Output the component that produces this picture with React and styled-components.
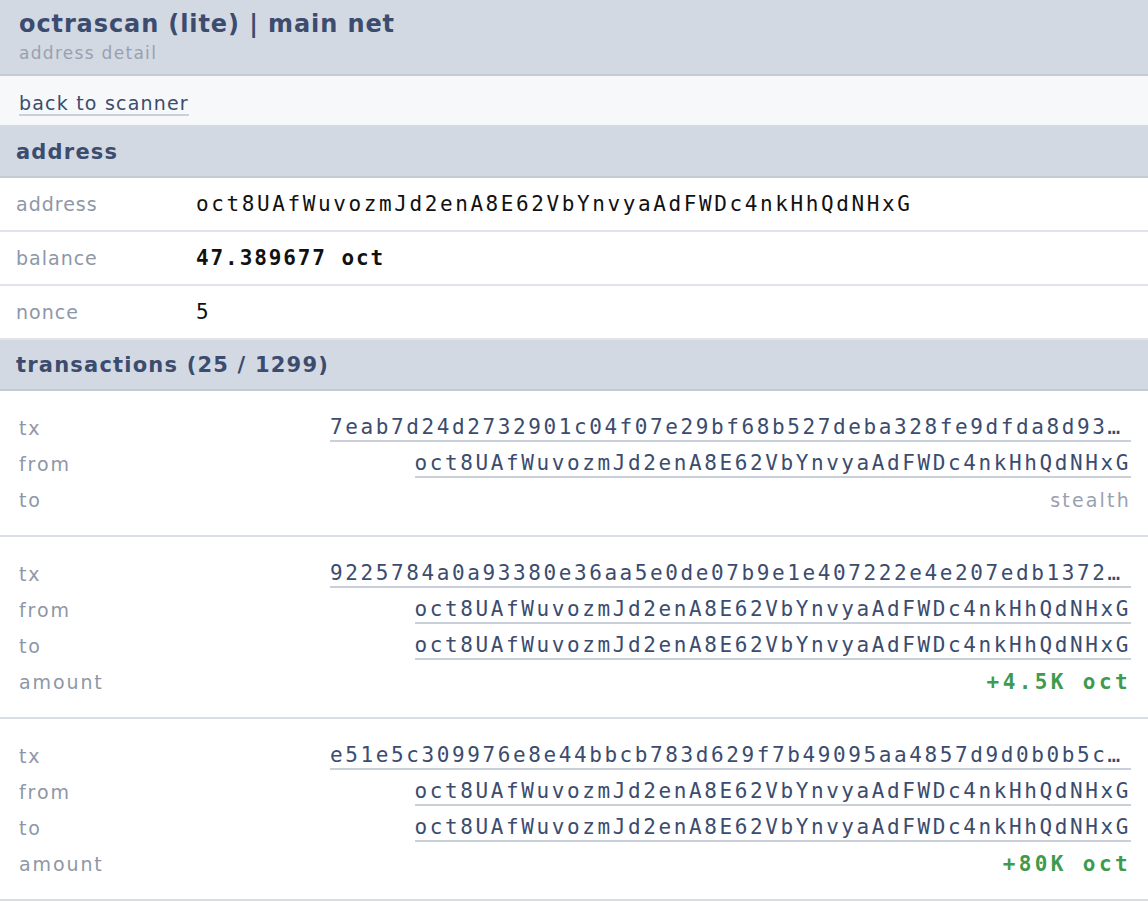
import React from 'react';
import styled, { createGlobalStyle } from 'styled-components';

const Global = createGlobalStyle`
  html, body { margin: 0; padding: 0; background: #ffffff; }
  body { font-family: "DejaVu Sans", Verdana, sans-serif; }
`;

const SANS = `"DejaVu Sans", Verdana, sans-serif`;
const MONO = `"DejaVu Sans Mono", Menlo, monospace`;

const Page = styled.div`
  width: 1148px;
  display: flex;
  flex-direction: column;
`;

const Header = styled.header`
  height: 76px;
  box-sizing: border-box;
  padding: 9px 19px 0;
  background: #d3d9e2;
  border-bottom: 2px solid #c4cbd5;
  display: flex;
  flex-direction: column;
`;

const Title = styled.h1`
  margin: 0;
  font-family: ${SANS};
  font-weight: bold;
  font-size: 24px;
  line-height: 30px;
  letter-spacing: 0.9px;
  color: #3b4c6f;
`;

const Subtitle = styled.div`
  font-family: ${SANS};
  font-size: 17px;
  line-height: 28px;
  letter-spacing: 1.3px;
  color: #98a1b0;
`;

const Nav = styled.nav`
  height: 51px;
  box-sizing: border-box;
  padding: 0 19px 9px;
  background: #f6f8fa;
  border-bottom: 2px solid #d4dae2;
  display: flex;
  align-items: flex-end;
`;

const Link = styled.a`
  font-family: ${SANS};
  font-size: 19px;
  letter-spacing: 1.2px;
  color: #3b4c6f;
  text-decoration: none;
  border-bottom: 2px solid #c9d0da;
  line-height: 22px;
`;

const SectionHead = styled.div`
  height: 51px;
  box-sizing: border-box;
  padding: 0 16px;
  background: #d3d9e2;
  border-bottom: 2px solid #c4cbd5;
  display: flex;
  align-items: center;
  font-family: ${SANS};
  font-weight: bold;
  font-size: 21px;
  letter-spacing: 1.2px;
  color: #3b4c6f;
`;

const InfoRow = styled.div`
  height: 54px;
  box-sizing: border-box;
  padding: 0 16px;
  border-bottom: 2px solid #e1e5eb;
  display: grid;
  grid-template-columns: 180px 1fr;
  align-items: center;
`;

const Label = styled.div`
  font-family: ${SANS};
  font-size: 19px;
  letter-spacing: ${(p) => (p.$wide ? '1.9px' : '1px')};
  color: #8d97a7;
`;

const Value = styled.div`
  font-family: ${MONO};
  font-size: 21px;
  letter-spacing: ${(p) => (p.$bold ? '1.9px' : '2.6px')};
  font-weight: ${(p) => (p.$bold ? 'bold' : 'normal')};
  color: #111111;
`;

const Card = styled.div`
  box-sizing: border-box;
  padding: 19px 17px 17px 19px;
  border-bottom: 2px solid #d9dee5;
  display: flex;
  flex-direction: column;
`;

const TxRow = styled.div`
  height: 36px;
  display: grid;
  grid-template-columns: 311px minmax(0, 1fr);
  align-items: center;
`;

const TxValue = styled.div`
  min-width: 0;
  text-align: right;
  white-space: nowrap;
  overflow: hidden;
`;

const Mono = styled.span`
  display: inline-block;
  max-width: 100%;
  box-sizing: border-box;
  overflow: hidden;
  text-overflow: ellipsis;
  white-space: nowrap;
  vertical-align: middle;
  font-family: ${MONO};
  font-size: 21px;
  line-height: 25px;
  letter-spacing: 2.6px;
  color: #3b4c6f;
  border-bottom: 2px solid #c9d0da;
`;

const Muted = styled.span`
  font-family: ${SANS};
  font-size: 19px;
  letter-spacing: 2.2px;
  color: #98a1b0;
`;

const Amount = styled.span`
  font-family: ${MONO};
  font-weight: bold;
  font-size: 21px;
  letter-spacing: 3.4px;
  color: #3e9a4e;
`;

const ADDR = 'oct8UAfWuvozmJd2enA8E62VbYnvyaAdFWDc4nkHhQdNHxG';

const txs = [
  {
    hash: '7eab7d24d2732901c04f07e29bf68b527deba328fe9dfda8d93a1c4e0b72f5d6',
    from: ADDR,
    to: null,
  },
  {
    hash: '9225784a0a93380e36aa5e0de07b9e1e407222e4e207edb1372f0c9a81d2e4b6',
    from: ADDR,
    to: ADDR,
    amount: '+4.5K oct',
  },
  {
    hash: 'e51e5c309976e8e44bbcb783d629f7b49095aa4857d9d0b0b5c7a2f3e91c08d4',
    from: ADDR,
    to: ADDR,
    amount: '+80K oct',
  },
];

export default function App() {
  return (
    <Page>
      <Global />
      <Header>
        <Title>octrascan (lite) | main net</Title>
        <Subtitle>address detail</Subtitle>
      </Header>
      <Nav>
        <Link href="#">back to scanner</Link>
      </Nav>
      <SectionHead>address</SectionHead>
      <InfoRow>
        <Label>address</Label>
        <Value>{ADDR}</Value>
      </InfoRow>
      <InfoRow>
        <Label>balance</Label>
        <Value $bold>47.389677 oct</Value>
      </InfoRow>
      <InfoRow>
        <Label>nonce</Label>
        <Value>5</Value>
      </InfoRow>
      <SectionHead>transactions (25 / 1299)</SectionHead>
      {txs.map((t) => (
        <Card key={t.hash}>
          <TxRow>
            <Label $wide>tx</Label>
            <TxValue>
              <Mono>{t.hash}</Mono>
            </TxValue>
          </TxRow>
          <TxRow>
            <Label $wide>from</Label>
            <TxValue>
              <Mono>{t.from}</Mono>
            </TxValue>
          </TxRow>
          <TxRow>
            <Label $wide>to</Label>
            <TxValue>
              {t.to ? <Mono>{t.to}</Mono> : <Muted>stealth</Muted>}
            </TxValue>
          </TxRow>
          {t.amount && (
            <TxRow>
              <Label $wide>amount</Label>
              <TxValue>
                <Amount>{t.amount}</Amount>
              </TxValue>
            </TxRow>
          )}
        </Card>
      ))}
    </Page>
  );
}
